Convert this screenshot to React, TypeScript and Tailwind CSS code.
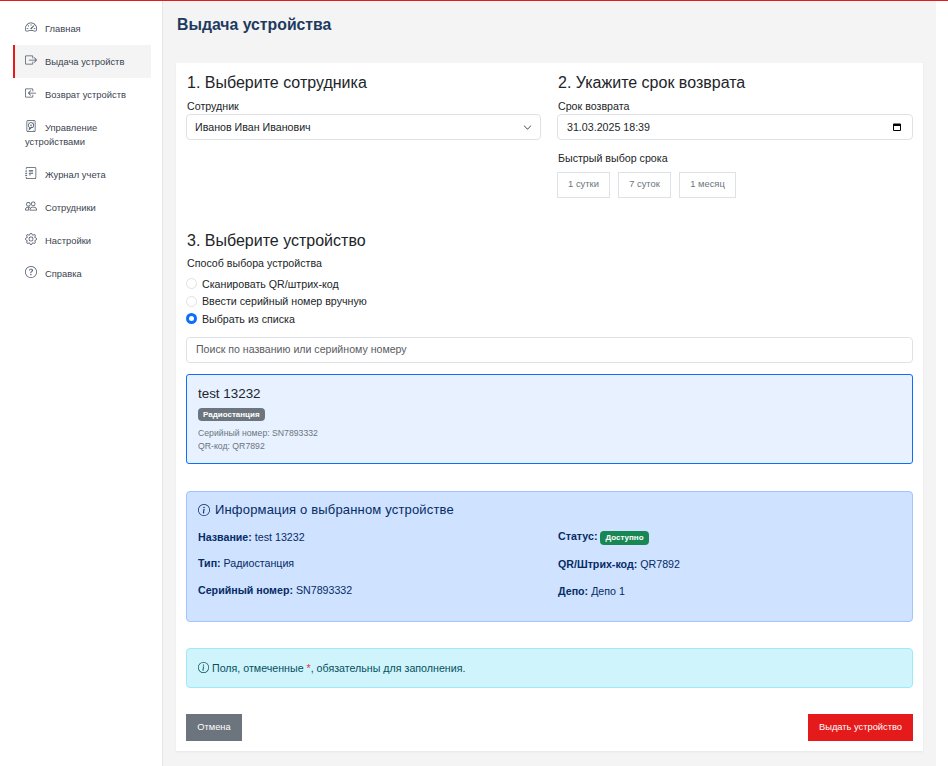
import React from "react";
import { BsSpeedometer2, BsBoxArrowRight, BsBoxArrowInLeft, BsDeviceHdd, BsJournalText, BsPeople, BsGear, BsQuestionCircle, BsInfoCircle, BsChevronDown } from "react-icons/bs";

const nav = [
  { icon: BsSpeedometer2, label: "Главная" },
  { icon: BsBoxArrowRight, label: "Выдача устройств", active: true },
  { icon: BsBoxArrowInLeft, label: "Возврат устройств" },
  { icon: BsDeviceHdd, label: "Управление устройствами" },
  { icon: BsJournalText, label: "Журнал учета" },
  { icon: BsPeople, label: "Сотрудники" },
  { icon: BsGear, label: "Настройки" },
  { icon: BsQuestionCircle, label: "Справка" },
];

function Radio({ label, checked }: { label: string; checked?: boolean }) {
  return (
    <div className="flex items-center h-[17.5px] text-[10.67px] text-[#212529]">
      {checked ? (
        <span className="w-[11px] h-[11px] rounded-full bg-white border-[3px] border-[#0d6efd] mr-[5px]" />
      ) : (
        <span className="w-[11px] h-[11px] rounded-full bg-white border border-[#dee2e6] mr-[5px]" />
      )}
      {label}
    </div>
  );
}

function Field({ k, children }: { k: string; children: React.ReactNode }) {
  return (
    <div className="text-[10.67px] text-[#052c65] leading-[16px]">
      <b>{k}</b> {children}
    </div>
  );
}

export default function App() {
  return (
    <div className="w-[948px] h-[766px] overflow-hidden bg-white flex flex-col font-['Liberation_Sans',Arial,sans-serif]">
      <div className="h-px bg-[#e51a1a] shrink-0" />
      <div className="flex flex-1 min-h-0">
        <aside className="w-[163px] shrink-0 bg-white border-r border-[#e5e5e5] pt-[11px] pl-[13px] pr-[11px]">
          {nav.map((n) => (
            <div
              key={n.label}
              className={`py-[9px] pl-[10px] pr-2 text-[9.4px] leading-[14px] text-[#3a4450] border-l-2 ${n.active ? "border-[#e51a1a] bg-[#f4f4f4]" : "border-transparent"}`}
            >
              <n.icon className="inline-block w-3 h-3 mr-[8px] align-[-1px] text-[#4b5563]" />
              {n.label}
            </div>
          ))}
        </aside>
        <main className="w-[773px] shrink-0 bg-[#f4f4f4] pl-[13px] pr-[13px] pt-[15px]">
          <h1 className="text-[15.8px] leading-[18px] font-bold text-[#1e3a5f] h-[47px] pl-px">Выдача устройства</h1>
          <div className="bg-white shadow-[0_1px_2px_rgba(0,0,0,0.06)] h-[688px] pl-[10px] pr-[10px] pt-[10px]">
            <div className="grid grid-cols-[355px_1fr] gap-x-[16px]">
              <div>
                <h2 className="text-[16px] leading-[20px] text-[#212529] mb-[6px] pl-px">1. Выберите сотрудника</h2>
                <div className="text-[10.67px] leading-[14px] text-[#212529] mb-px pl-px">Сотрудник</div>
                <div className="h-[26px] border border-[#dee2e6] rounded-[4px] bg-white flex items-center justify-between pl-[8px] pr-[8px] text-[10.67px] text-[#212529]">
                  Иванов Иван Иванович
                  <BsChevronDown className="w-[9px] h-[9px] text-[#343a40]" />
                </div>
              </div>
              <div>
                <h2 className="text-[16px] leading-[20px] text-[#212529] mb-[6px] pl-px">2. Укажите срок возврата</h2>
                <div className="text-[10.67px] leading-[14px] text-[#212529] mb-px pl-px">Срок возврата</div>
                <div className="h-[26px] border border-[#dee2e6] rounded-[4px] bg-white flex items-center justify-between pl-[9px] pr-[11px] text-[10.67px] text-[#212529]">
                  31.03.2025 18:39
                  <svg viewBox="0 0 8 8" className="w-[8px] h-[8px]">
                    <path d="M0 1.5A1 1 0 0 1 1 .5h6a1 1 0 0 1 1 1V7a1 1 0 0 1-1 1H1a1 1 0 0 1-1-1zM1 3v4h6V3z" fill="#000" fillRule="evenodd" />
                  </svg>
                </div>
                <div className="text-[10.67px] leading-[14px] text-[#212529] mt-[11px] mb-[7px] pl-px">Быстрый выбор срока</div>
                <div className="flex gap-[8px]">
                  <div className="h-[26px] w-[53px] border border-[#dee2e6] flex items-center justify-center pb-px text-[9.4px] text-[#6c757d]">1 сутки</div>
                  <div className="h-[26px] w-[53px] border border-[#dee2e6] flex items-center justify-center pb-px text-[9.4px] text-[#6c757d]">7 суток</div>
                  <div className="h-[26px] w-[57px] border border-[#dee2e6] flex items-center justify-center pb-px text-[9.4px] text-[#6c757d]">1 месяц</div>
                </div>
              </div>
            </div>
            <h2 className="text-[16px] leading-[20px] text-[#212529] mt-[33px] mb-[5px] pl-px">3. Выберите устройство</h2>
            <div className="text-[10.67px] leading-[14px] text-[#212529] mb-[5px] pl-px">Способ выбора устройства</div>
            <Radio label="Сканировать QR/штрих-код" />
            <Radio label="Ввести серийный номер вручную" />
            <Radio label="Выбрать из списка" checked />
            <div className="mt-[9px] h-[26px] border border-[#dee2e6] rounded-[4px] flex items-center pl-[9px] text-[10.6px] text-[#595c5f]">
              Поиск по названию или серийному номеру
            </div>
            <div className="mt-[11px] h-[90px] rounded-[3px] border border-[#0d6efd] bg-[#e7f1ff] pl-[11px] pt-[11px]">
              <div className="text-[13.4px] leading-[16px] text-[#212529]">test 13232</div>
              <span className="block w-fit mt-[6px] h-[13px] leading-[13px] px-[5px] rounded-[4px] bg-[#6c757d] text-white text-[8px] font-bold">Радиостанция</span>
              <div className="mt-[6px] text-[8.7px] leading-[13px] text-[#6c757d]">Серийный номер: SN7893332</div>
              <div className="text-[8.7px] leading-[13px] text-[#6c757d]">QR-код: QR7892</div>
            </div>
            <div className="mt-[27px] h-[131px] rounded-[4px] border border-[#9ec5fe] bg-[#cfe2ff] pl-[11px] pr-[11px] pt-[10px] text-[#052c65]">
              <div className="flex items-center text-[13px] leading-[16px] tracking-[0.17px]">
                <BsInfoCircle className="w-[12px] h-[12px] mr-[5px]" />
                Информация о выбранном устройстве
              </div>
              <div className="grid grid-cols-[344px_1fr] gap-x-[16px] mt-[11px]">
                <div className="flex flex-col gap-[10.5px]">
                  <Field k="Название:">test 13232</Field>
                  <Field k="Тип:">Радиостанция</Field>
                  <Field k="Серийный номер:">SN7893332</Field>
                </div>
                <div className="flex flex-col gap-[10.5px] -mt-px">
                  <div className="mb-px">
                    <Field k="Статус:">
                      <span className="inline-block h-[14px] leading-[14px] px-[5px] rounded-[4px] bg-[#198754] text-white text-[8px] font-bold">Доступно</span>
                    </Field>
                  </div>
                  <Field k="QR/Штрих-код:">QR7892</Field>
                  <Field k="Депо:">Депо 1</Field>
                </div>
              </div>
            </div>
            <div className="mt-[26px] h-[40px] rounded-[4px] border border-[#9eeaf9] bg-[#cff4fc] pl-[11px] flex items-center text-[10.67px] text-[#055160]">
              <BsInfoCircle className="w-[11px] h-[11px] mr-[3px]" />
              Поля, отмеченные&nbsp;<span className="text-[#dc3545]">*</span>, обязательны для заполнения.
            </div>
            <div className="mt-[26px] flex justify-between">
              <div className="h-[27px] w-[56px] bg-[#6c757d] text-white text-[9.3px] pt-[2px] flex items-center justify-center">Отмена</div>
              <div className="h-[27px] w-[105px] bg-[#e51a1a] text-white text-[9.3px] pt-[2px] flex items-center justify-center">Выдать устройство</div>
            </div>
          </div>
        </main>
      </div>
    </div>
  );
}
